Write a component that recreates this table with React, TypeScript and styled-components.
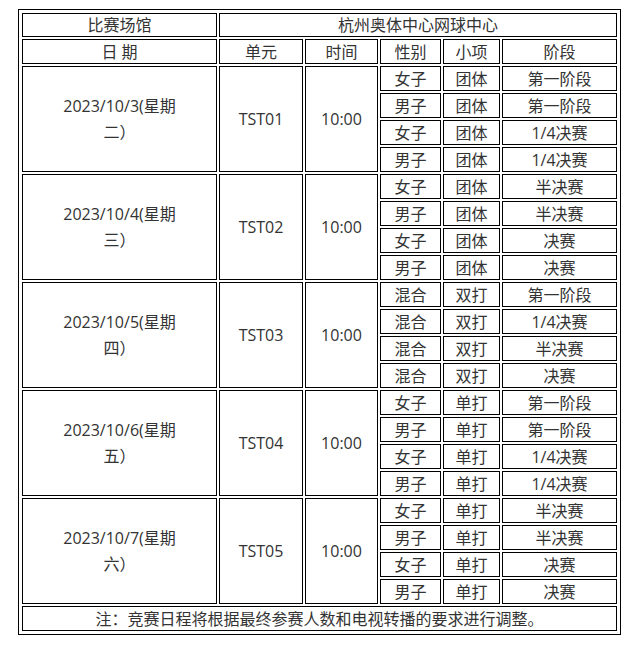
import React from "react";
import styled, { createGlobalStyle } from "styled-components";

type Item = {
  gender: string;
  event: string;
  stage: string;
};

type Day = {
  date: string;
  weekday: string;
  unit: string;
  time: string;
  items: Item[];
};

const days: Day[] = [
  {
    date: "2023/10/3(星期",
    weekday: "二）",
    unit: "TST01",
    time: "10:00",
    items: [
      { gender: "女子", event: "团体", stage: "第一阶段" },
      { gender: "男子", event: "团体", stage: "第一阶段" },
      { gender: "女子", event: "团体", stage: "1/4决赛" },
      { gender: "男子", event: "团体", stage: "1/4决赛" },
    ],
  },
  {
    date: "2023/10/4(星期",
    weekday: "三）",
    unit: "TST02",
    time: "10:00",
    items: [
      { gender: "女子", event: "团体", stage: "半决赛" },
      { gender: "男子", event: "团体", stage: "半决赛" },
      { gender: "女子", event: "团体", stage: "决赛" },
      { gender: "男子", event: "团体", stage: "决赛" },
    ],
  },
  {
    date: "2023/10/5(星期",
    weekday: "四）",
    unit: "TST03",
    time: "10:00",
    items: [
      { gender: "混合", event: "双打", stage: "第一阶段" },
      { gender: "混合", event: "双打", stage: "1/4决赛" },
      { gender: "混合", event: "双打", stage: "半决赛" },
      { gender: "混合", event: "双打", stage: "决赛" },
    ],
  },
  {
    date: "2023/10/6(星期",
    weekday: "五）",
    unit: "TST04",
    time: "10:00",
    items: [
      { gender: "女子", event: "单打", stage: "第一阶段" },
      { gender: "男子", event: "单打", stage: "第一阶段" },
      { gender: "女子", event: "单打", stage: "1/4决赛" },
      { gender: "男子", event: "单打", stage: "1/4决赛" },
    ],
  },
  {
    date: "2023/10/7(星期",
    weekday: "六）",
    unit: "TST05",
    time: "10:00",
    items: [
      { gender: "女子", event: "单打", stage: "半决赛" },
      { gender: "男子", event: "单打", stage: "半决赛" },
      { gender: "女子", event: "单打", stage: "决赛" },
      { gender: "男子", event: "单打", stage: "决赛" },
    ],
  },
];

const columns = [195, 84, 73, 61, 57, 115];

const App = () => {
  return (
    <>
      <GlobalStyle />
      <Page>
        <Schedule>
          <colgroup>
            {columns.map((w, i) => (
              <Col key={i} $width={w} />
            ))}
          </colgroup>
          <tbody>
            <Row $height={24}>
              <Cell>比赛场馆</Cell>
              <Cell colSpan={5}>杭州奥体中心网球中心</Cell>
            </Row>
            <Row>
              <Cell>日 期</Cell>
              <Cell>单元</Cell>
              <Cell>时间</Cell>
              <Cell>性别</Cell>
              <Cell>小项</Cell>
              <Cell>阶段</Cell>
            </Row>
            {days.map((day) =>
              day.items.map((item, i) => (
                <Row key={day.unit + i}>
                  {i === 0 && (
                    <>
                      <DateCell rowSpan={4}>
                        {day.date}
                        <br />
                        {day.weekday}
                      </DateCell>
                      <Cell rowSpan={4}>{day.unit}</Cell>
                      <Cell rowSpan={4}>{day.time}</Cell>
                    </>
                  )}
                  <Cell>{item.gender}</Cell>
                  <Cell>{item.event}</Cell>
                  <Cell>{item.stage}</Cell>
                </Row>
              ))
            )}
            <Row>
              <Cell colSpan={6}>注：竞赛日程将根据最终参赛人数和电视转播的要求进行调整。</Cell>
            </Row>
          </tbody>
        </Schedule>
      </Page>
    </>
  );
};

const GlobalStyle = createGlobalStyle`
  html, body {
    margin: 0;
    padding: 0;
    background: #ffffff;
  }
  body {
    font-family: "Open Sans", "Noto Sans CJK SC", sans-serif;
    color: #333333;
  }
`;

const Page = styled.div`
  padding: 9px 0 0 18px;
`;

const Schedule = styled.table`
  table-layout: fixed;
  border-collapse: separate;
  border-spacing: 2px;
  border: 1px solid #000000;
  padding: 1px;
`;

const Col = styled.col<{ $width: number }>`
  width: ${(props) => props.$width}px;
`;

const Row = styled.tr<{ $height?: number }>`
  height: ${(props) => props.$height ?? 25}px;
`;

const Cell = styled.td`
  box-sizing: border-box;
  border: 1px solid #000000;
  padding: 0;
  text-align: center;
  vertical-align: middle;
  font-size: 16px;
  line-height: 20px;
  color: #333333;
  white-space: nowrap;
`;

const DateCell = styled(Cell)`
  line-height: 26px;
`;

export default App;
